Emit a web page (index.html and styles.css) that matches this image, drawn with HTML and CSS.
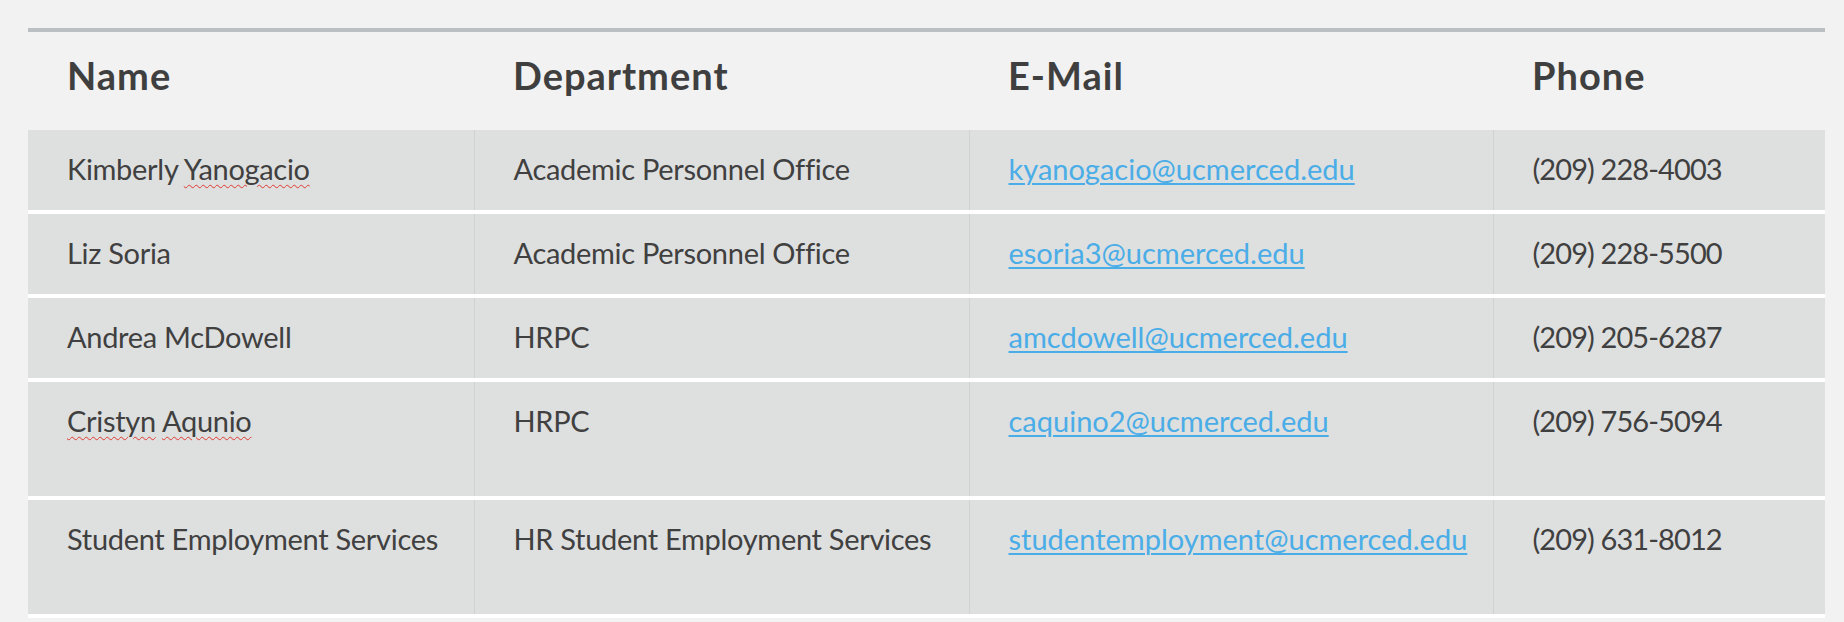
FILE: index.html
```html
<!DOCTYPE html>
<html lang="en">
<head>
<meta charset="utf-8">
<title>Contacts</title>
<link rel="stylesheet" href="styles.css">
</head>
<body>
<div class="page">
  <table class="contacts">
    <colgroup>
      <col class="c-name">
      <col class="c-dept">
      <col class="c-mail">
      <col class="c-phone">
    </colgroup>
    <thead>
      <tr class="head">
        <th>Name</th>
        <th>Department</th>
        <th>E-Mail</th>
        <th>Phone</th>
      </tr>
    </thead>
    <tbody>
      <tr>
        <td>Kimberly <span class="spell">Yanogacio</span></td>
        <td>Academic Personnel Office</td>
        <td><a href="#">kyanogacio@ucmerced.edu</a></td>
        <td class="phone">(209) 228-4003</td>
      </tr>
      <tr>
        <td>Liz Soria</td>
        <td>Academic Personnel Office</td>
        <td><a href="#">esoria3@ucmerced.edu</a></td>
        <td class="phone">(209) 228-5500</td>
      </tr>
      <tr>
        <td>Andrea McDowell</td>
        <td>HRPC</td>
        <td><a href="#">amcdowell@ucmerced.edu</a></td>
        <td class="phone">(209) 205-6287</td>
      </tr>
      <tr class="tall">
        <td><span class="spell">Cristyn</span> <span class="spell">Aqunio</span></td>
        <td>HRPC</td>
        <td><a href="#">caquino2@ucmerced.edu</a></td>
        <td class="phone">(209) 756-5094</td>
      </tr>
      <tr class="tall">
        <td>Student Employment Services</td>
        <td>HR Student Employment Services</td>
        <td><a href="#">studentemployment@ucmerced.edu</a></td>
        <td class="phone">(209) 631-8012</td>
      </tr>
    </tbody>
  </table>
</div>
</body>
</html>
```

FILE: styles.css
```css
html, body {
  margin: 0;
  padding: 0;
  background: #f2f2f2;
}

.page {
  padding: 28px 19px 0 28px;
  font-family: Lato, "Open Sans", sans-serif;
  color: #404040;
}

.contacts {
  width: 1797px;
  border-collapse: collapse;
  table-layout: fixed;
  border-top: 4px solid #b9bfc2;
}

.c-name { width: 446px; }
.c-dept { width: 495px; }
.c-mail { width: 524px; }
.c-phone { width: 332px; }

.head th {
  text-align: left;
  font-weight: 700;
  font-size: 38px;
  line-height: 46px;
  letter-spacing: 1px;
  padding: 20px 0 32px 39px;
  color: #3f3f3f;
  background: #f2f2f2;
}

tbody tr {
  background: #dedfdf;
  border-bottom: 4px solid #ffffff;
}

tbody td {
  font-size: 29px;
  line-height: 36px;
  letter-spacing: -0.3px;
  padding: 21px 0 23px 39px;
  vertical-align: top;
  white-space: nowrap;
  border-left: 1px solid #d0d3d3;
}

tbody td:first-child {
  border-left: none;
}

tbody td.phone {
  letter-spacing: -0.9px;
}

tbody tr.tall td {
  padding-bottom: 57px;
}

a {
  color: #4aade7;
  letter-spacing: 0;
  text-decoration: underline;
  text-decoration-thickness: 2px;
  text-underline-offset: 3px;
}

.spell {
  text-decoration: underline wavy #e0392f;
  text-decoration-thickness: 1px;
  text-underline-offset: 4px;
}
```
